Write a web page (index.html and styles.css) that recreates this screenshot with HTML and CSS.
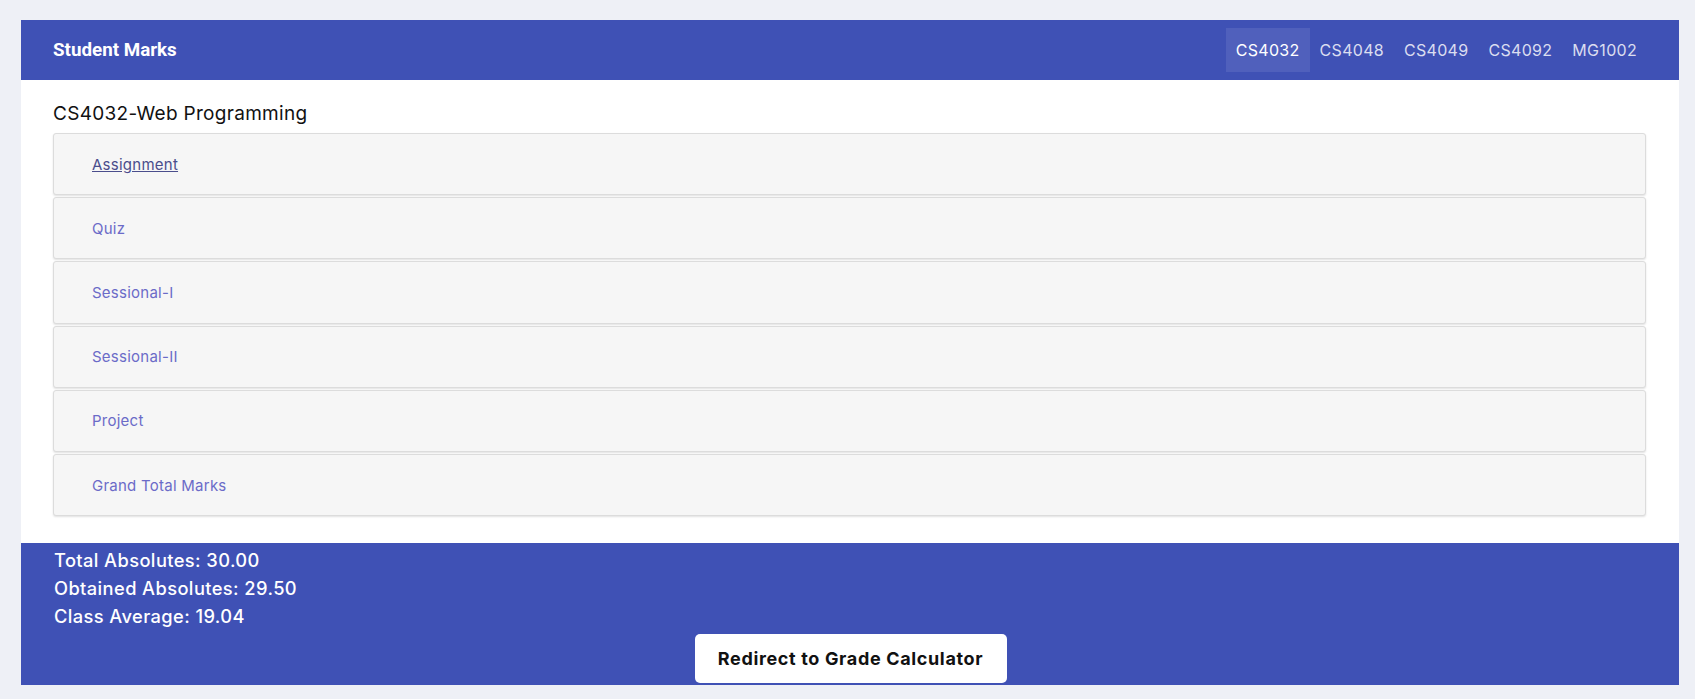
FILE: index.html
```html
<!DOCTYPE html>
<html lang="en">
<head>
<meta charset="utf-8">
<title>Student Marks</title>
<link rel="stylesheet" href="styles.css">
</head>
<body>
<div class="card">
  <header class="topbar">
    <div class="brand">Student Marks</div>
    <nav class="tabs">
      <a class="tab active" href="#">CS4032</a>
      <a class="tab" href="#">CS4048</a>
      <a class="tab" href="#">CS4049</a>
      <a class="tab" href="#">CS4092</a>
      <a class="tab" href="#">MG1002</a>
    </nav>
  </header>
  <main class="content">
    <h2 class="course">CS4032-Web Programming</h2>
    <div class="rows">
      <div class="row"><a class="row-link visited" href="#">Assignment</a></div>
      <div class="row"><a class="row-link" href="#">Quiz</a></div>
      <div class="row"><a class="row-link" href="#">Sessional-I</a></div>
      <div class="row"><a class="row-link" href="#">Sessional-II</a></div>
      <div class="row"><a class="row-link" href="#">Project</a></div>
      <div class="row"><a class="row-link" href="#">Grand Total Marks</a></div>
    </div>
  </main>
  <footer class="summary">
    <p class="stat">Total Absolutes: 30.00</p>
    <p class="stat">Obtained Absolutes: 29.50</p>
    <p class="stat">Class Average: 19.04</p>
    <div class="actions"><button class="btn">Redirect to Grade Calculator</button></div>
  </footer>
</div>
</body>
</html>
```
FILE: styles.css
```css
* { box-sizing: border-box; }
html, body { margin: 0; padding: 0; }
body {
  background: #eef0f6;
  font-family: "Inter", "Open Sans", sans-serif;
  padding: 20px 16px 15px 21px;
}
.card {
  background: #ffffff;
}
.topbar {
  height: 60px;
  background: #3f51b5;
  display: flex;
  align-items: center;
  justify-content: space-between;
  padding: 0 32px;
}
.brand {
  font-family: "Roboto", sans-serif;
  font-weight: 700;
  font-size: 18.8px;
  color: #ffffff;
}
.tabs { display: flex; }
.tab {
  display: block;
  height: 44px;
  line-height: 44px;
  padding: 0 10px;
  font-size: 16px;
  letter-spacing: 0.3px;
  color: rgba(255,255,255,0.82);
  text-decoration: none;
}
.tab.active {
  background: #5060bc;
  color: #ffffff;
}
.content {
  padding: 20px 33px 27px 32px;
}
.course {
  margin: 0 0 6px;
  font-size: 19px;
  font-weight: 400;
  letter-spacing: 0.3px;
  line-height: 27px;
  color: #111111;
}
.rows { display: flex; flex-direction: column; gap: 2px; }
.row {
  height: 62.2px;
  background: #f6f6f6;
  border: 1px solid #dcdcdc;
  border-radius: 3px;
  box-shadow: 0 1px 2px rgba(0,0,0,0.12);
  display: flex;
  align-items: center;
  padding-left: 38px;
}
.row-link {
  font-size: 15px;
  letter-spacing: 0.25px;
  color: #6b6bc8;
  text-decoration: none;
}
.row-link.visited {
  color: #4a4d8c;
  text-decoration: underline;
}
.summary {
  background: #3f51b5;
  padding: 3px 32px 2px 33px;
  color: #ffffff;
}
.stat {
  margin: 0;
  font-size: 18.3px;
  font-weight: 500;
  letter-spacing: 0.4px;
  line-height: 28px;
}
.actions {
  display: flex;
  justify-content: center;
  margin-top: 4px;
}
.btn {
  width: 312px;
  height: 49px;
  background: #ffffff;
  border: none;
  border-radius: 5px;
  font-family: "Inter", sans-serif;
  font-weight: 700;
  font-size: 18px;
  letter-spacing: 0.65px;
  color: #111111;
}
```
